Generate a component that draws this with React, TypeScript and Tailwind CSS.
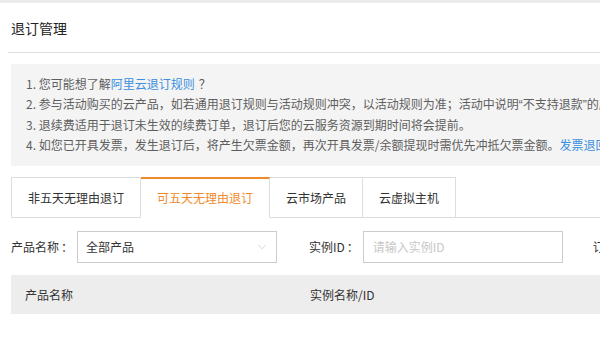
import { ChevronDown } from 'lucide-react';

const tabs = ['非五天无理由退订', '可五天无理由退订', '云市场产品', '云虚拟主机'];
const activeTab = 1;

export default function App() {
  return (
    <div
      className="h-[362px] w-full overflow-hidden bg-white text-[#333]"
      style={{ fontFamily: '"Noto Sans CJK SC", "Noto Sans", sans-serif' }}
    >
      {/* top strip */}
      <div className="h-[3px] bg-[#ececec]" />

      {/* page title */}
      <div className="ml-[8px] flex h-[50px] items-center border-b border-[#dedede] pl-[3px]">
        <h1 className="text-[14px] leading-none font-normal text-[#222]">退订管理</h1>
      </div>

      {/* notice box */}
      <div className="ml-[11px] mt-[11px] overflow-hidden bg-[#f4f4f4] pt-[10px] pb-[11px] pl-[15px] text-[12px] leading-[20px] whitespace-nowrap text-[#5e5e5e]">
        <p>
          1. 您可能想了解<a className="text-[#3b8fe0]">阿里云退订规则</a>
          <span className="pl-[4px]">？</span>
        </p>
        <p>
          2. 参与活动购买的云产品，如若通用退订规则与活动规则冲突，以活动规则为准；活动中说明
          <span className="font-['Liberation_Sans']">“</span>不支持退款<span className="font-['Liberation_Sans']">”</span>
          的产品不支持退订。
        </p>
        <p>3. 退续费适用于退订未生效的续费订单，退订后您的云服务资源到期时间将会提前。</p>
        <p>
          4. 如您已开具发票，发生退订后，将产生欠票金额，再次开具发票/余额提现时需优先冲抵欠票金额。
          <a className="text-[#3b8fe0]">发票退回流程</a>
        </p>
      </div>

      {/* tabs */}
      <div className="ml-[11px] mt-[11px] flex border-b border-[#dddddd]">
        {tabs.map((t, i) => (
          <div
            key={t}
            className={
              i === activeTab
                ? '-mb-px flex h-[41px] shrink-0 items-center border border-l-0 border-t-2 border-[#dddddd] border-t-[#f08a2c] border-b-white bg-white px-4 text-[12px] whitespace-nowrap text-[#f08a2c]'
                : i === 0
                  ? '-mb-px flex h-[41px] shrink-0 items-center border border-[#dddddd] bg-white px-4 text-[12px] whitespace-nowrap text-[#333]'
                  : '-mb-px flex h-[41px] shrink-0 items-center border border-l-0 border-[#dddddd] bg-white px-4 text-[12px] whitespace-nowrap text-[#333]'
            }
          >
            {t}
          </div>
        ))}
      </div>

      {/* filters */}
      <div className="ml-[11px] mt-[13px] flex items-center text-[12px] whitespace-nowrap">
        <span className="w-[66px] shrink-0 text-[#333]">
          产品名称<span className="pl-[2px]">：</span>
        </span>
        <div className="flex h-[32px] w-[200px] shrink-0 items-center justify-between border border-[#cccccc] pr-[7px] pl-[8px]">
          <span className="text-[#333]">全部产品</span>
          <ChevronDown className="h-[14px] w-[14px] text-[#c4c4c4]" strokeWidth={1.2} />
        </div>

        <span className="ml-[32px] shrink-0 text-[#333]">
          实例ID<span className="pl-[2px]">：</span>
        </span>
        <div className="ml-[4px] flex h-[32px] w-[200px] shrink-0 items-center border border-[#cccccc] pl-[9px]">
          <span className="text-[#c8c8c8]">请输入实例ID</span>
        </div>

        <span className="ml-[30px] shrink-0 text-[#333]">订单号：</span>
      </div>

      {/* table header */}
      <div className="ml-[11px] mt-[12px] flex h-[39px] items-center bg-[#ededed] pl-[14px] text-[12px] whitespace-nowrap text-[#333]">
        <span className="w-[285px] shrink-0">产品名称</span>
        <span>实例名称/ID</span>
      </div>
    </div>
  );
}
